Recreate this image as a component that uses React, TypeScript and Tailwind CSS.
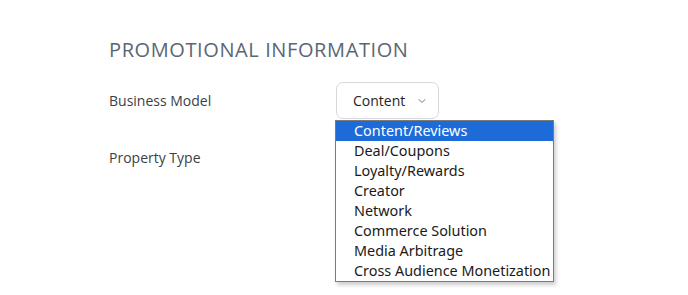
import { ChevronDown } from "lucide-react";

const options = [
  "Content/Reviews",
  "Deal/Coupons",
  "Loyalty/Rewards",
  "Creator",
  "Network",
  "Commerce Solution",
  "Media Arbitrage",
  "Cross Audience Monetization",
];

const App = () => {
  return (
    <div className="h-[295px] w-[688px] bg-white pl-[109px] pt-[37px] font-['Open_Sans',sans-serif]">
      <h2 className="text-[20px] leading-[26px] tracking-[0.6px] text-[#5b6673]">
        PROMOTIONAL INFORMATION
      </h2>

      <div className="mt-[19px] flex items-center">
        <div className="w-[227px] text-[14px] text-[#3a3f47]">Business Model</div>
        <div className="relative">
          <button className="flex h-[37px] w-[103px] items-center rounded-[7px] border border-[#d6d8db] bg-white pl-[16px] text-[14px] text-[#1f2328]">
            Content
            <ChevronDown className="ml-[11px] h-[12px] w-[12px] text-[#4b5563]" strokeWidth={1.6} />
          </button>
          <ul className="absolute left-[-1px] top-[38px] z-10 w-[219px] border border-[#7a7a7a] bg-white py-0 text-[14.4px] leading-[20px] text-[#1a1a1a] shadow-[2px_3px_4px_rgba(0,0,0,0.2)] font-['Noto_Sans','Open_Sans',sans-serif]">
            {options.map((o, i) => (
              <li
                key={o}
                className={
                  i === 0
                    ? "h-[20px] bg-[#1c6bd8] pl-[18px] text-white"
                    : "h-[20px] pl-[18px]"
                }
              >
                {o}
              </li>
            ))}
          </ul>
        </div>
      </div>

      <div className="mt-[28px] flex items-center">
        <div className="w-[227px] text-[14px] text-[#3a3f47]">Property Type</div>
      </div>
    </div>
  );
};

export default App;
